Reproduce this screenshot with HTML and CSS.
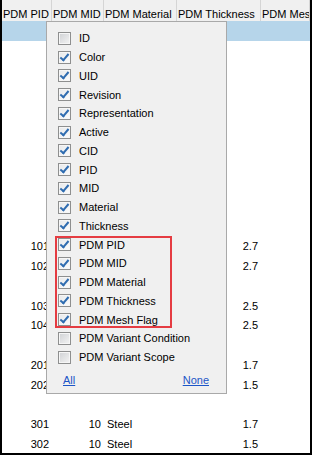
FILE: index.html
```html
<!DOCTYPE html>
<html>
<head>
<meta name="viewport" content="width=device-width, initial-scale=1">
<link rel="stylesheet" href="styles.css">
</head>
<body>

<div class="frame">
  <div class="head">
    <div>PDM PID</div>
    <div>PDM MID</div>
    <div>PDM Material</div>
    <div>PDM Thickness</div>
    <div>PDM Mesh Flag</div>
  </div>

  <div class="row sel"><span></span><span></span><span></span><span></span><span></span></div>
  <div class="row"><span></span><span></span><span></span><span></span><span></span></div>
  <div class="row"><span></span><span></span><span></span><span></span><span></span></div>
  <div class="row"><span></span><span></span><span></span><span></span><span></span></div>
  <div class="row"><span></span><span></span><span></span><span></span><span></span></div>
  <div class="row"><span></span><span></span><span></span><span></span><span></span></div>
  <div class="row"><span></span><span></span><span></span><span></span><span></span></div>
  <div class="row"><span></span><span></span><span></span><span></span><span></span></div>
  <div class="row"><span></span><span></span><span></span><span></span><span></span></div>
  <div class="row"><span></span><span></span><span></span><span></span><span></span></div>
  <div class="row"><span></span><span></span><span></span><span></span><span></span></div>
  <div class="row"><span class="num">101</span><span></span><span></span><span class="num">2.7</span><span></span></div>
  <div class="row"><span class="num">102</span><span></span><span></span><span class="num">2.7</span><span></span></div>
  <div class="row"><span></span><span></span><span></span><span></span><span></span></div>
  <div class="row"><span class="num">103</span><span></span><span></span><span class="num">2.5</span><span></span></div>
  <div class="row"><span class="num">104</span><span></span><span></span><span class="num">2.5</span><span></span></div>
  <div class="row"><span></span><span></span><span></span><span></span><span></span></div>
  <div class="row"><span class="num">201</span><span></span><span></span><span class="num">1.7</span><span></span></div>
  <div class="row"><span class="num">202</span><span></span><span></span><span class="num">1.5</span><span></span></div>
  <div class="row"><span></span><span></span><span></span><span></span><span></span></div>
  <div class="row"><span class="num">301</span><span class="num">10</span><span>Steel</span><span class="num">1.7</span><span></span></div>
  <div class="row"><span class="num">302</span><span class="num">10</span><span>Steel</span><span class="num">1.5</span><span></span></div>

  <!-- column chooser popup -->
  <div class="picker">
    <div class="item"><span class="box"></span>ID</div>
    <div class="item"><span class="box on"></span>Color</div>
    <div class="item"><span class="box on"></span>UID</div>
    <div class="item"><span class="box on"></span>Revision</div>
    <div class="item"><span class="box on"></span>Representation</div>
    <div class="item"><span class="box on"></span>Active</div>
    <div class="item"><span class="box on"></span>CID</div>
    <div class="item"><span class="box on"></span>PID</div>
    <div class="item"><span class="box on"></span>MID</div>
    <div class="item"><span class="box on"></span>Material</div>
    <div class="item"><span class="box on"></span>Thickness</div>
    <div class="group">
      <div class="item"><span class="box on"></span>PDM PID</div>
      <div class="item"><span class="box on"></span>PDM MID</div>
      <div class="item"><span class="box on"></span>PDM Material</div>
      <div class="item"><span class="box on"></span>PDM Thickness</div>
      <div class="item"><span class="box on"></span>PDM Mesh Flag</div>
    </div>
    <div class="item"><span class="box"></span>PDM Variant Condition</div>
    <div class="item"><span class="box"></span>PDM Variant Scope</div>
    <div class="links">
      <a href="#">All</a>
      <a href="#">None</a>
    </div>
  </div>
</div>

</body>
</html>
```

FILE: styles.css
```css
* {
  box-sizing: border-box;
}

body {
  margin: 0;
  font-family: "Liberation Sans", Arial, sans-serif;
  font-size: 11px;
  color: #000;
  background-color: white;
}

.frame {
  position: relative;
  width: 312px;
  height: 455px;
  border: 2px solid #000;
  border-top: none;
  overflow: hidden;
}

.head, .row {
  display: grid;
  grid-template-columns: 50px 52px 73px 84px 1fr;
}

.head {
  height: 21px;
  background-color: #f0f0f0;
}

.head div {
  border-right: 1px solid #d5d5d5;
  padding: 8px 0 0 1px;
  line-height: 13px;
  white-space: nowrap;
  overflow: hidden;
}

.row {
  height: 19.75px;
  line-height: 16px;
}

.row span {
  padding: 0 3px;
  white-space: nowrap;
}

.row .num {
  text-align: right;
}

.sel {
  background-color: #b6d5ea;
}

.picker {
  position: absolute;
  left: 44px;
  top: 21px;
  width: 181px;
  height: 373px;
  padding: 7px 0 0 11px;
  background-color: #f0f0f0;
  border: 1px solid #a9a9a9;
}

.item {
  display: flex;
  align-items: center;
  height: 18.75px;
  white-space: nowrap;
}

.box {
  position: relative;
  width: 13px;
  height: 13px;
  margin-right: 8px;
  border: 1px solid #8e8f8f;
  background: linear-gradient(135deg, #cfd1d4, #f4f4f4);
  box-shadow: inset 0 0 0 1px #f6f6f6;
}

.box.on {
  background: linear-gradient(135deg, #e6e8ea, #fcfcfc);
}

.box.on:after {
  content: "";
  position: absolute;
  left: 3px;
  top: 0px;
  width: 3px;
  height: 7px;
  border: solid #2f6cb0;
  border-width: 0 2px 2px 0;
  transform: rotate(40deg);
}

/* red highlight round the PDM columns */
.group {
  position: relative;
}

.group:after {
  content: "";
  position: absolute;
  left: -3px;
  top: 1px;
  bottom: 1px;
  width: 113px;
  border: 2px solid #e53c42;
}

.links {
  display: flex;
  justify-content: space-between;
  margin-top: 5px;
  padding: 0 17px 0 5px;
  line-height: 16px;
}

.links a {
  color: #1c55c7;
}
```
